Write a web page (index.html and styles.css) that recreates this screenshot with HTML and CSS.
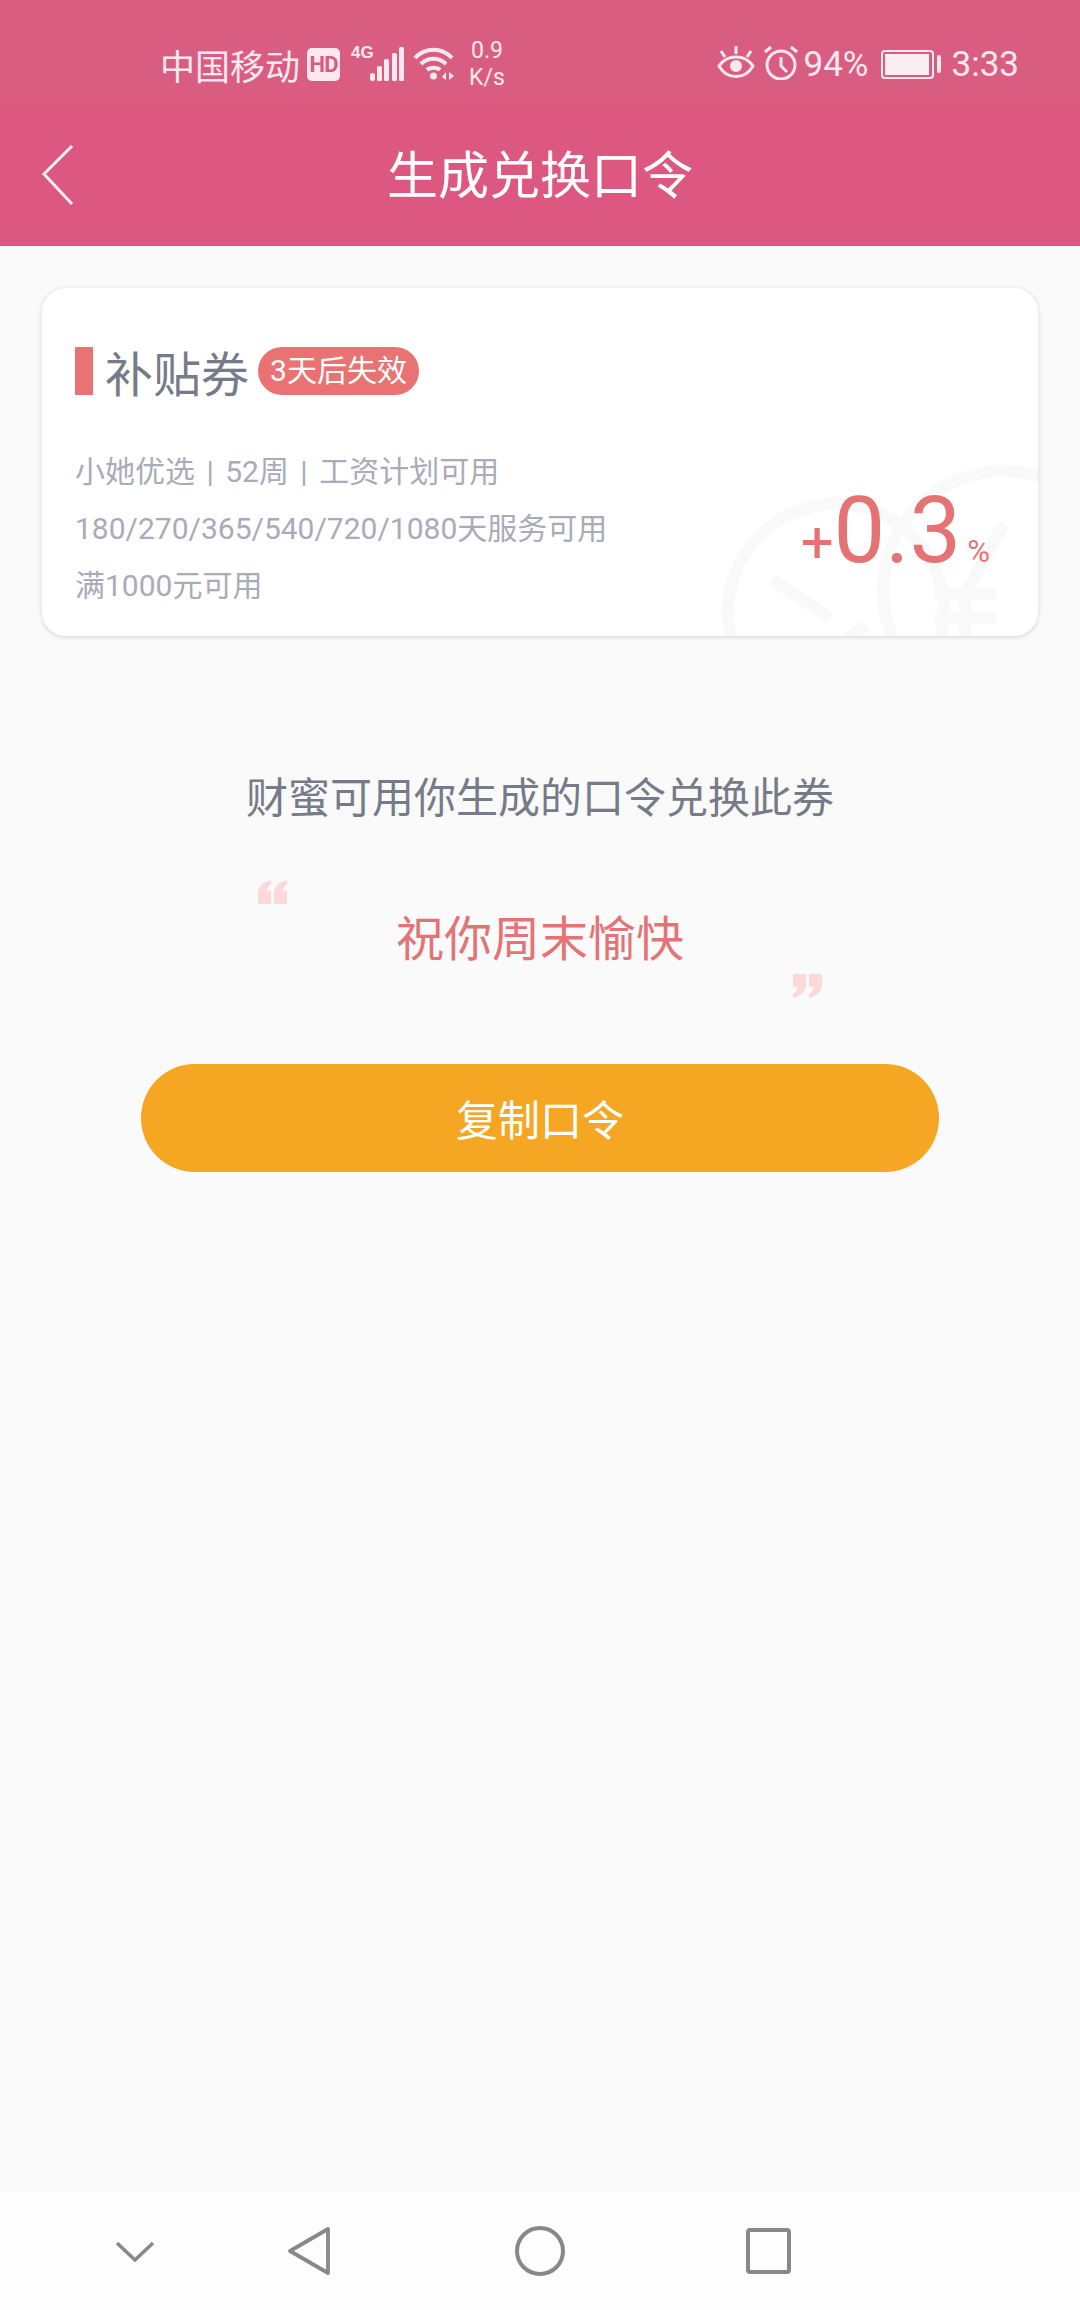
FILE: index.html
```html
<!DOCTYPE html>
<html lang="zh-CN">
<head>
    <meta charset="UTF-8">
    <meta name="viewport" content="width=device-width, initial-scale=1.0">
    <title>生成兑换口令</title>
    <link rel="stylesheet" href="styles.css">
</head>
<body>

<div class="page">
    <header class="header">
        <div class="statusbar">
            <span class="carrier">中国移动</span>
            <span class="hd-badge">HD</span>
            <span class="net-type">4G</span>
            <svg class="icon-signal" width="35" height="36" viewBox="19 0 35 36">
                <rect x="19" y="27" width="5" height="8" rx="2.500"/>
                <rect x="26" y="20" width="5" height="15" rx="1.500"/>
                <rect x="33" y="13" width="5" height="22" rx="1.500"/>
                <rect x="41" y="7" width="5" height="28" rx="1.500"/>
                <rect x="48" y="1" width="5" height="34" rx="1.500"/>
            </svg>
            <svg class="icon-wifi" width="42" height="36" viewBox="0 0 42 36" fill="none">
                <path d="M2 12C12 1 29 1 39 12" stroke-width="4"/>
                <path d="M8 18C15 11 26 11 33 18" stroke-width="4"/>
                <path d="M14 24C17 21 24 21 27 24" stroke-width="4"/>
                <circle class="solid" cx="20.500" cy="30" r="3.500"/>
                <path class="solid" d="M33 26v8l-4-3zM36 26l5 4-5 4z"/>
            </svg>
            <div class="netspeed">
                <span>0.9</span>
                <span>K/s</span>
            </div>
            <div class="status-right">
                <svg class="icon-eye" width="38" height="34" viewBox="0 0 38 34" fill="none">
                    <path d="M2 21C10 9 28 9 36 21C28 35 10 35 2 21Z" stroke-width="3"/>
                    <circle class="solid" cx="19" cy="21" r="6"/>
                    <path d="M19 1v8M4 6l4 6M34 6l-4 6" stroke-width="3"/>
                </svg>
                <svg class="icon-alarm" width="34" height="35" viewBox="0 0 34 35" fill="none">
                    <circle cx="17" cy="20" r="14" stroke-width="3"/>
                    <path d="M17 12v9l6 6M1 7l6-5M33 7l-6-5" stroke-width="3"/>
                </svg>
                <span class="battery-pct">94%</span>
                <div class="battery">
                    <div class="battery-fill"></div>
                </div>
                <div class="battery-nub"></div>
                <span class="clock">3:33</span>
            </div>
        </div>
        <div class="navbar">
            <svg class="back-icon" width="34" height="64" viewBox="0 0 34 64" fill="none">
                <path d="M31 3L3 31L31 61" stroke="#fdeef3" stroke-width="3"/>
            </svg>
            <h1 class="nav-title">生成兑换口令</h1>
        </div>
    </header>

    <main class="content">
        <section class="coupon">
            <svg class="coupon-watermark" width="996" height="348" viewBox="0 0 996 348" fill="none">
                <circle cx="794" cy="324" r="108"/>
                <circle cx="961" cy="303" r="120"/>
                <path d="M730 292L788 330M772 374L824 338M752 386L820 350"/>
                <path d="M962 236L924 304M893 306H954M893 330H954M923 304V348"/>
            </svg>
            <div class="coupon-head">
                <span class="coupon-mark"></span>
                <span class="coupon-name">补贴券</span>
                <span class="coupon-tag">3天后失效</span>
            </div>
            <div class="coupon-desc">
                <p class="desc-spaced">小她优选 | 52周 | 工资计划可用</p>
                <p>180/270/365/540/720/1080天服务可用</p>
                <p>满1000元可用</p>
            </div>
            <div class="coupon-rate">
                <span class="rate-plus">+</span><span class="rate-num">0.3</span><span class="rate-unit">%</span>
            </div>
        </section>

        <p class="hint">财蜜可用你生成的口令兑换此券</p>

        <div class="code">
            <svg class="quote quote-open" width="30" height="24" viewBox="0 0 30 24">
                <path d="M0 24V13C0 7 5 2 13 0V4C10 6 9 8 9 11H13V24ZM16 24V13C16 7 21 2 29 0V4C26 6 25 8 25 11H29V24Z"/>
            </svg>
            <span class="code-text">祝你周末愉快</span>
            <svg class="quote quote-close" width="30" height="24" viewBox="0 0 30 24">
                <path d="M30 0V11C30 17 25 22 17 24V20C20 18 21 16 21 13H17V0ZM14 0V11C14 17 9 22 1 24V20C4 18 5 16 5 13H1V0Z"/>
            </svg>
        </div>

        <button class="copy-btn">复制口令</button>
    </main>

    <footer class="sysnav">
        <svg width="40" height="22" viewBox="0 0 40 22" fill="none">
            <path d="M2 3L20 20L38 3" stroke-width="3.500"/>
        </svg>
        <svg width="44" height="50" viewBox="0 0 44 50" fill="none">
            <path d="M41 3V47L3 25Z" stroke-width="3.800" stroke-linejoin="round"/>
        </svg>
        <svg width="50" height="50" viewBox="0 0 50 50" fill="none">
            <circle cx="25" cy="25" r="23" stroke-width="4"/>
        </svg>
        <svg width="45" height="46" viewBox="0 0 45 46" fill="none">
            <rect x="2" y="2" width="41" height="42" rx="2" stroke-width="4"/>
        </svg>
    </footer>
</div>

</body>
</html>
```

FILE: styles.css
```css
html, body {
    margin: 0;
    padding: 0;
    height: 100%;
}
body {
    font-family: Roboto, "Noto Sans CJK SC", sans-serif;
    background-color: #fafafa;
}
.page {
    display: flex;
    flex-direction: column;
    height: 2310px;
}
.header {
    background: linear-gradient(#d95d81, #d95d81 90px, #dd5880 110px);
    height: 246px;
    color: #fde8ef;
}
.statusbar {
    display: flex;
    align-items: center;
    height: 100px;
    padding: 28px 61px 0 160px;
    box-sizing: border-box;
}
.statusbar svg {
    stroke: #fde8ef;
    fill: none;
}
.statusbar svg .solid,
.icon-signal rect {
    fill: #fde8ef;
    stroke: none;
}
.carrier {
    font-size: 35px;
}
.hd-badge {
    margin-left: 7px;
    width: 33px;
    height: 33px;
    border-radius: 5px;
    background-color: #fde8ef;
    color: #d95d81;
    font-size: 22px;
    font-weight: bold;
    line-height: 33px;
    text-align: center;
    letter-spacing: -1px;
}
.net-type {
    width: 19px;
    margin: 0 0 22px 11px;
    font-family: "Liberation Sans Narrow", "Liberation Sans", sans-serif;
    font-size: 17px;
    font-weight: bold;
    line-height: 18px;
}
.icon-wifi {
    margin-left: 8px;
}
.netspeed {
    display: flex;
    flex-direction: column;
    align-items: center;
    margin-left: 14px;
    font-size: 23px;
    line-height: 27px;
}
.status-right {
    display: flex;
    align-items: center;
    margin-left: auto;
}
.icon-eye {
    margin-top: -4px;
}
.icon-alarm {
    margin-top: -4px;
    margin-left: 9px;
}
.battery-pct {
    margin-left: 6px;
    font-size: 35px;
}
.battery {
    margin-left: 12px;
    width: 53px;
    height: 29px;
    box-sizing: border-box;
    border: 2px solid #fde8ef;
    border-radius: 4px;
    padding: 2px;
}
.battery-fill {
    width: 44px;
    height: 100%;
    background-color: #fbeef3;
}
.battery-nub {
    margin-left: 3px;
    width: 4px;
    height: 18px;
    border-radius: 2px;
    background-color: #fde8ef;
}
.clock {
    margin-left: 11px;
    font-size: 35px;
}
.navbar {
    position: relative;
    height: 146px;
    display: flex;
    align-items: center;
    justify-content: center;
}
.back-icon {
    position: absolute;
    left: 41px;
    top: 43px;
}
.nav-title {
    margin: 0;
    padding-bottom: 2px;
    font-size: 51px;
    font-weight: normal;
    color: #fff;
}
.content {
    flex: 1;
    display: flex;
    flex-direction: column;
    align-items: center;
}
.coupon {
    position: relative;
    overflow: hidden;
    box-sizing: border-box;
    width: 996px;
    height: 348px;
    margin-top: 42px;
    padding: 59px 33px 0;
    background-color: #fff;
    border-radius: 24px;
    box-shadow: 0 1px 5px rgba(0, 0, 0, 0.16);
}
.coupon-watermark {
    position: absolute;
    left: 0;
    top: 0;
}
.coupon-watermark circle,
.coupon-watermark path {
    stroke: #f9f9f9;
    stroke-width: 12;
}
.coupon-head {
    position: relative;
    display: flex;
    align-items: center;
    height: 48px;
}
.coupon-mark {
    width: 18px;
    height: 48px;
    background-color: #e97272;
}
.coupon-name {
    margin-left: 12px;
    font-size: 48px;
    color: #777a88;
}
.coupon-tag {
    margin-left: 9px;
    padding: 0 12px;
    height: 48px;
    line-height: 47px;
    border-radius: 24px;
    background-color: #e97272;
    color: #fff;
    font-size: 30px;
}
.coupon-desc {
    position: relative;
    margin-top: 48px;
    font-size: 30px;
    color: #a9abb9;
}
.coupon-desc p {
    margin: 0;
    height: 57px;
    line-height: 57px;
}
.coupon-desc .desc-spaced {
    word-spacing: 4px;
}
.coupon-rate {
    position: absolute;
    right: 48px;
    top: 188px;
    display: flex;
    align-items: baseline;
    color: #e57373;
}
.rate-plus {
    font-size: 58px;
}
.rate-num {
    font-size: 92px;
    line-height: 110px;
}
.rate-unit {
    margin-left: 6px;
    font-size: 31px;
}
.hint {
    margin: 133px 0 0;
    font-size: 42px;
    line-height: 60px;
    color: #777a88;
}
.code {
    position: relative;
    width: 564px;
    height: 118px;
    margin-top: 51px;
    display: flex;
    align-items: center;
    justify-content: center;
}
.code-text {
    padding-bottom: 8px;
    font-size: 48px;
    color: #e27476;
}
.quote {
    position: absolute;
    fill: #fdd9d9;
}
.quote-open {
    left: 0;
    top: 0;
}
.quote-close {
    right: 0;
    bottom: 0;
}
.copy-btn {
    width: 798px;
    height: 108px;
    margin-top: 66px;
    padding-bottom: 3px;
    border: none;
    border-radius: 54px;
    background-color: #f5a623;
    color: #fff;
    font-family: inherit;
    font-size: 42px;
}
.sysnav {
    height: 118px;
    background-color: #fdfdfd;
    display: grid;
    grid-template-columns: 228px 200px 258px 1fr;
    justify-items: start;
    align-items: center;
}
.sysnav svg {
    stroke: #888;
    margin-left: 115px;
}
.sysnav svg:nth-child(2) {
    margin-left: 59px;
}
.sysnav svg:nth-child(3) {
    margin-left: 87px;
}
.sysnav svg:nth-child(4) {
    margin-left: 60px;
}
```
